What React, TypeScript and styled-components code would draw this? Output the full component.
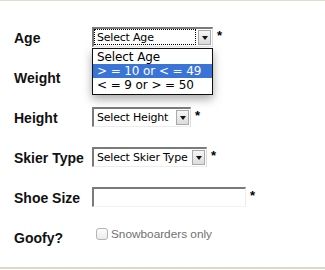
import React from "react";
import styled, { createGlobalStyle } from "styled-components";

const GlobalStyle = createGlobalStyle`
  html, body {
    margin: 0;
    padding: 0;
    background: #ffffff;
  }
  body {
    font-family: "Liberation Sans", Arial, sans-serif;
  }
`;

const Page = styled.div`
  width: 325px;
  height: 270px;
  box-sizing: border-box;
  border-top: 1px solid #e2ddd0;
  position: relative;
  overflow: hidden;
`;

const BottomRule = styled.div`
  position: absolute;
  left: 0;
  right: 0;
  top: 266px;
  height: 2px;
  background: #dcd8cb;
`;

const Form = styled.div`
  display: flex;
  flex-direction: column;
  gap: 20px;
  padding: 26px 0 0 14px;
`;

const Row = styled.div`
  display: grid;
  grid-template-columns: 78px auto;
  align-items: center;
  height: 20px;
`;

const Label = styled.div`
  font-weight: bold;
  font-size: 14px;
  color: #111;
  white-space: nowrap;
  padding-top: 2px;
`;

const Field = styled.div`
  display: flex;
  align-items: flex-start;
  position: relative;
  height: 20px;
`;

const SelectBox = styled.div<{ $w: number; $focus?: boolean }>`
  position: relative;
  width: ${(p) => p.$w}px;
  height: 20px;
  box-sizing: border-box;
  border-top: 2px solid #7b7b7b;
  border-left: 2px solid #7b7b7b;
  border-right: 1px solid #dcdcdc;
  border-bottom: 1px solid #ededed;
  background: #fff;
  display: flex;
  align-items: center;
  font-family: "DejaVu Sans", Verdana, sans-serif;
  font-size: 11px;
  letter-spacing: -0.2px;
  color: #000;
  padding-left: 3px;
  &::before {
    content: "";
    display: ${(p) => (p.$focus ? "block" : "none")};
    position: absolute;
    left: 0;
    top: 0;
    right: 16px;
    bottom: 1px;
    border: 1px dotted #000;
  }
`;

const SelectText = styled.span`
  flex: 1;
  white-space: nowrap;
`;

const ArrowButton = styled.span`
  width: 13px;
  height: 15px;
  margin-right: 1px;
  box-sizing: border-box;
  border: 1px solid #a9a9a9;
  background: linear-gradient(#f6f6f6, #dcdcdc);
  display: flex;
  align-items: center;
  justify-content: center;
  &::after {
    content: "";
    border-left: 3px solid transparent;
    border-right: 3px solid transparent;
    border-top: 4px solid #111;
  }
`;

const Required = styled.span`
  font-weight: bold;
  font-size: 13px;
  line-height: 13px;
  margin-left: 4px;
  margin-top: 2px;
  color: #000;
`;

const TextInput = styled.div<{ $w: number }>`
  width: ${(p) => p.$w}px;
  height: 20px;
  box-sizing: border-box;
  border-top: 2px solid #7b7b7b;
  border-left: 2px solid #7b7b7b;
  border-right: 1px solid #ececec;
  border-bottom: 1px solid #f2f2f2;
  background: #fff;
`;

const Dropdown = styled.ul`
  position: absolute;
  left: 0;
  top: 21px;
  width: 121px;
  margin: 0;
  padding: 1px 0 2px;
  list-style: none;
  box-sizing: border-box;
  background: #fff;
  border: 1px solid #111;
  box-shadow: 0 4px 9px rgba(0, 0, 0, 0.35);
  z-index: 2;
`;

const Option = styled.li<{ $active?: boolean }>`
  height: 14px;
  line-height: 14px;
  padding-left: 4px;
  font-family: "DejaVu Sans", Verdana, sans-serif;
  font-size: 12px;
  letter-spacing: -0.1px;
  white-space: nowrap;
  background: ${(p) => (p.$active ? "#3a74d6" : "transparent")};
  color: ${(p) => (p.$active ? "#fff" : "#000")};
`;

const CheckLabel = styled.label`
  display: flex;
  align-items: center;
  gap: 3px;
  padding-left: 4px;
  font-size: 11.8px;
  color: #6f6f6f;
`;

const CheckBox = styled.span`
  width: 12px;
  height: 12px;
  box-sizing: border-box;
  border: 1px solid #b4b4b4;
  border-radius: 3px;
  background: linear-gradient(#fdfdfd, #ececec);
`;

const App = () => {
  return (
    <>
      <GlobalStyle />
      <Page>
        <Form>
          <Row>
            <Label>Age</Label>
            <Field>
              <SelectBox $w={121} $focus>
                <SelectText>Select Age</SelectText>
                <ArrowButton />
              </SelectBox>
              <Required>*</Required>
              <Dropdown>
                <Option>Select Age</Option>
                <Option $active>&gt; = 10 or &lt; = 49</Option>
                <Option>&lt; = 9 or &gt; = 50</Option>
              </Dropdown>
            </Field>
          </Row>
          <Row>
            <Label>Weight</Label>
            <Field>
              <SelectBox $w={121}>
                <SelectText />
                <ArrowButton />
              </SelectBox>
            </Field>
          </Row>
          <Row>
            <Label>Height</Label>
            <Field>
              <SelectBox $w={99}>
                <SelectText>Select Height</SelectText>
                <ArrowButton />
              </SelectBox>
              <Required>*</Required>
            </Field>
          </Row>
          <Row>
            <Label>Skier Type</Label>
            <Field>
              <SelectBox $w={115}>
                <SelectText>Select Skier Type</SelectText>
                <ArrowButton />
              </SelectBox>
              <Required>*</Required>
            </Field>
          </Row>
          <Row>
            <Label>Shoe Size</Label>
            <Field>
              <TextInput $w={154} />
              <Required>*</Required>
            </Field>
          </Row>
          <Row>
            <Label>Goofy?</Label>
            <Field>
              <CheckLabel>
                <CheckBox />
                Snowboarders only
              </CheckLabel>
            </Field>
          </Row>
        </Form>
        <BottomRule />
      </Page>
    </>
  );
};

export default App;
